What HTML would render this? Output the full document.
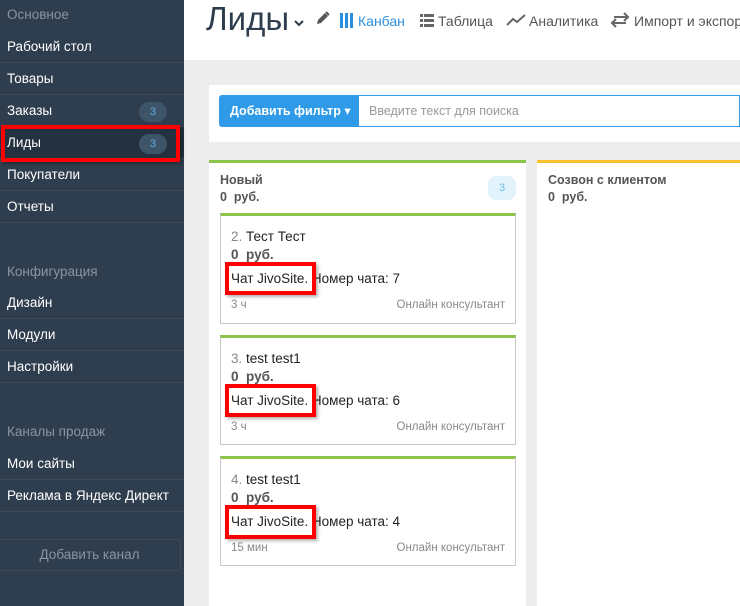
<!DOCTYPE html>
<html><head><meta charset="utf-8"><style>
*{margin:0;padding:0;box-sizing:border-box}
body{width:740px;height:606px;overflow:hidden;font-family:"Liberation Sans","DejaVu Sans",sans-serif;background:#ededed;position:relative}
.sb{position:absolute;left:0;top:0;width:184px;height:606px;background:#2f3e4e;color:#fff;font-size:13.5px}
.sec{position:absolute;left:7px;color:#8a949e;font-size:13.5px}
.it{position:absolute;left:0;width:184px;height:32px;line-height:31px;padding-left:7px;border-bottom:1px solid #3c4a59}
.bd{position:absolute;right:17px;top:7px;width:28px;height:20px;border-radius:10px;background:#3e5468;color:#5fb0e6;font-size:11px;text-align:center;line-height:20px}
.red{position:absolute;border:4px solid #f00;box-shadow:2px 2px 3px rgba(0,0,0,.3)}
.hdr{position:absolute;left:184px;top:0;right:0;height:60px;background:#fff}
.nav{position:absolute;top:13px;font-size:14px;color:#555;white-space:nowrap}
.card{position:absolute;left:220px;width:296px;background:#fff;border:1px solid #c8c8c8;border-top:3px solid #8bc34a;font-size:13.5px;color:#222}
.card .a{position:absolute;left:10px;white-space:nowrap}
.ft{font-size:11.5px;color:#888}
</style></head><body>
<div class="sb">
<div class="sec" style="top:7px">Основное</div>
<div class="it" style="top:31px">Рабочий стол</div>
<div class="it" style="top:63px">Товары</div>
<div class="it" style="top:95px">Заказы<span class="bd">3</span></div>
<div class="it" style="top:127px;background:#243140">Лиды<span class="bd">3</span></div>
<div class="it" style="top:159px">Покупатели</div>
<div class="it" style="top:191px">Отчеты</div>
<div class="sec" style="top:264px">Конфигурация</div>
<div class="it" style="top:287px">Дизайн</div>
<div class="it" style="top:319px">Модули</div>
<div class="it" style="top:351px">Настройки</div>
<div class="sec" style="top:424px">Каналы продаж</div>
<div class="it" style="top:448px">Мои сайты</div>
<div class="it" style="top:480px">Реклама в Яндекс Директ</div>
<div style="position:absolute;left:-2px;top:539px;width:183px;height:32px;border:1px solid #3c4a59;border-radius:3px;color:#8a949e;text-align:center;line-height:30px">Добавить канал</div>
</div>
<div class="red" style="left:1px;top:125px;width:179px;height:37px"></div>
<div class="hdr"></div>
<div style="position:absolute;left:206px;top:0px;font-size:33px;color:#2f3e4e">Лиды</div>
<svg style="position:absolute;left:294px;top:20px" width="10" height="7" viewBox="0 0 10 7"><path d="M1 1l4 4 4-4" stroke="#2f3e4e" stroke-width="2" fill="none"/></svg>
<svg style="position:absolute;left:316px;top:11px" width="14" height="14" viewBox="0 0 14 14"><path d="M1 13l1-4 7-7 3 3-7 7z" fill="#555"/><path d="M10 1l3 3" stroke="#555" stroke-width="2"/></svg>
<svg style="position:absolute;left:340px;top:13px" width="13" height="15" viewBox="0 0 13 15"><rect x="0" y="0" width="3" height="15" fill="#2b8fdf"/><rect x="5" y="0" width="3" height="15" fill="#2b8fdf"/><rect x="10" y="0" width="3" height="15" fill="#2b8fdf"/></svg>
<div class="nav" style="left:358px;color:#2b8fdf">Канбан</div>
<svg style="position:absolute;left:420px;top:14px" width="14" height="13" viewBox="0 0 14 13"><g fill="#666"><rect x="0" y="0" width="3" height="3"/><rect x="4" y="0" width="10" height="3"/><rect x="0" y="5" width="3" height="3"/><rect x="4" y="5" width="10" height="3"/><rect x="0" y="10" width="3" height="3"/><rect x="4" y="10" width="10" height="3"/></g></svg>
<div class="nav" style="left:438px">Таблица</div>
<svg style="position:absolute;left:506px;top:14px" width="20" height="12" viewBox="0 0 20 12"><path d="M1 11l6-6 4 3 8-7" stroke="#666" stroke-width="2" fill="none"/></svg>
<div class="nav" style="left:529px">Аналитика</div>
<svg style="position:absolute;left:610px;top:12px" width="20" height="16" viewBox="0 0 20 16"><path d="M4 5h14M14 1l4 4-4 4" stroke="#666" stroke-width="2" fill="none"/><path d="M16 11H2M6 7l-4 4 4 4" stroke="#666" stroke-width="2" fill="none"/></svg>
<div class="nav" style="left:634px">Импорт и экспорт</div>
<div style="position:absolute;left:209px;top:85px;width:531px;height:57px;background:#fff"></div>
<div style="position:absolute;left:219px;top:95px;width:140px;height:32px;background:#2f9be8;border-radius:3px 0 0 3px;color:#fff;font-weight:bold;font-size:12.5px;line-height:32px;padding-left:11px">Добавить фильтр ▾</div>
<div style="position:absolute;left:359px;top:95px;width:381px;height:32px;border:1px solid #2f9be8;border-left:none;color:#999;font-size:12.5px;line-height:30px;padding-left:10px">Введите текст для поиска</div>
<div style="position:absolute;left:209px;top:160px;width:317px;height:446px;background:#fff;border-top:3px solid #8bc34a"></div>
<div style="position:absolute;left:220px;top:172px;font-size:12.5px;font-weight:bold;color:#555;line-height:17px">Новый<br>0&nbsp; руб.</div>
<div style="position:absolute;left:488px;top:176px;width:28px;height:24px;border-radius:8px;background:#e3f3fc;color:#6bbbe8;font-size:11px;text-align:center;line-height:24px">3</div>
<div style="position:absolute;left:537px;top:160px;width:203px;height:446px;background:#fff;border-top:3px solid #fbc02d"></div>
<div style="position:absolute;left:548px;top:172px;font-size:12.5px;font-weight:bold;color:#555;line-height:17px">Созвон с клиентом<br>0&nbsp; руб.</div>

<div class="card" style="top:213px;height:111px">
<div class="a" style="top:13px"><span style="color:#888">2.</span> Тест Тест</div>
<div class="a" style="top:31px;font-weight:bold;color:#555">0&nbsp; руб.</div>
<div class="a" style="top:55px">Чат JivoSite. Номер чата: 7</div>
<div class="a ft" style="top:83px">3 ч</div>
<div class="ft" style="position:absolute;right:10px;top:83px">Онлайн консультант</div>
</div>
<div class="card" style="top:335px;height:110px">
<div class="a" style="top:13px"><span style="color:#888">3.</span> test test1</div>
<div class="a" style="top:31px;font-weight:bold;color:#555">0&nbsp; руб.</div>
<div class="a" style="top:55px">Чат JivoSite. Номер чата: 6</div>
<div class="a ft" style="top:83px">3 ч</div>
<div class="ft" style="position:absolute;right:10px;top:83px">Онлайн консультант</div>
</div>
<div class="card" style="top:456px;height:110px">
<div class="a" style="top:13px"><span style="color:#888">4.</span> test test1</div>
<div class="a" style="top:31px;font-weight:bold;color:#555">0&nbsp; руб.</div>
<div class="a" style="top:55px">Чат JivoSite. Номер чата: 4</div>
<div class="a ft" style="top:83px">15 мин</div>
<div class="ft" style="position:absolute;right:10px;top:83px">Онлайн консультант</div>
</div>
<div class="red" style="left:225px;top:262px;width:91px;height:33px"></div>
<div class="red" style="left:225px;top:384px;width:91px;height:33px"></div>
<div class="red" style="left:225px;top:505px;width:91px;height:34px"></div>
</body></html>
